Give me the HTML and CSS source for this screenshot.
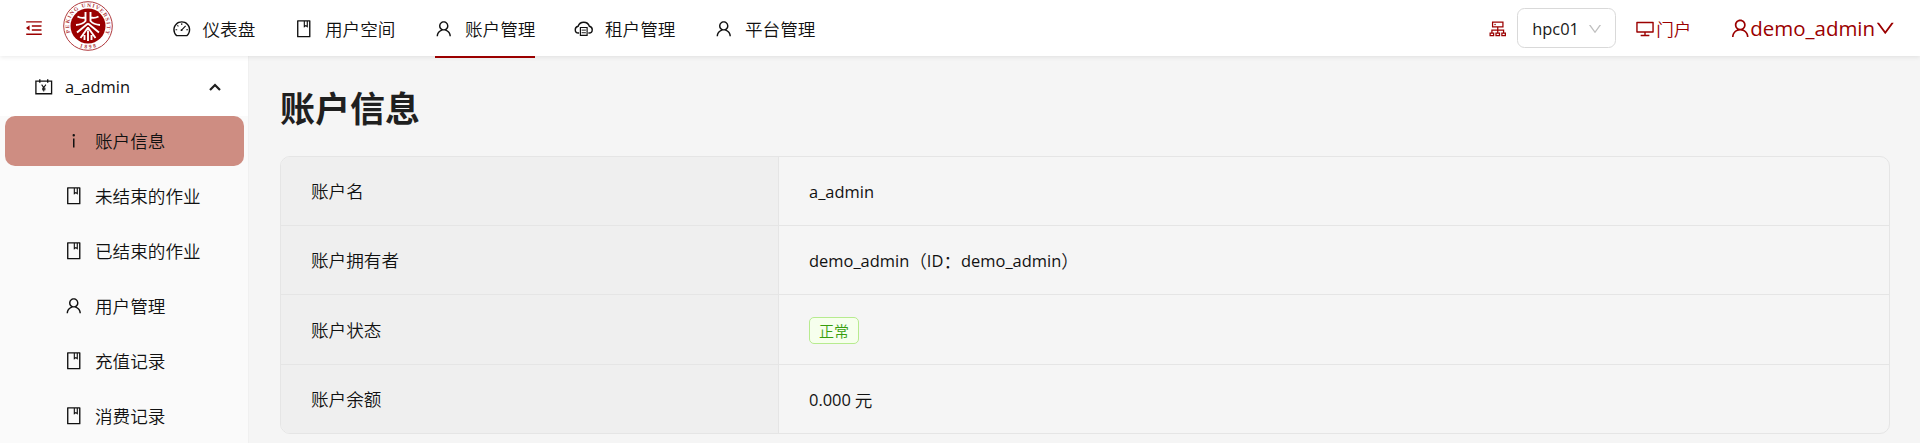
FILE: index.html
```html
<!DOCTYPE html>
<html lang="zh-CN">
<head>
<meta charset="utf-8">
<title>账户信息</title>
<link rel="stylesheet" href="styles.css">
</head>
<body>
<svg class="sprite" aria-hidden="true">
  <symbol id="user" viewBox="0 0 1024 1024"><path d="M858.5 763.6a374 374 0 00-80.6-119.5 375.63 375.63 0 00-119.5-80.6c-.4-.2-.8-.3-1.2-.5C719.5 518 760 444.7 760 362c0-137-111-248-248-248S264 225 264 362c0 82.7 40.5 156 102.8 201.1-.4.2-.8.3-1.2.5-44.8 18.9-85 46-119.5 80.6a375.63 375.63 0 00-80.6 119.5A371.7 371.7 0 00136 901.8a8 8 0 008 8.2h60c4.4 0 7.9-3.5 8-7.8 2-77.2 33-149.5 87.8-204.3 56.7-56.7 132-87.9 212.2-87.9s155.500 31.200 212.200 87.900C779 752.700 810 825 812 902.200c.1 4.400 3.600 7.800 8 7.800h60a8 8 0 008-8.200c-1-47.800-10.900-94.300-29.500-138.200zM512 534c-45.900 0-89.100-17.900-121.600-50.400S340 407.900 340 362c0-45.900 17.900-89.100 50.400-121.600S466.100 190 512 190s89.100 17.900 121.600 50.400S684 316.100 684 362c0 45.900-17.900 89.100-50.400 121.600S557.900 534 512 534z"/></symbol>
  <symbol id="book" viewBox="0 0 1024 1024"><path d="M832 64H192c-17.700 0-32 14.300-32 32v832c0 17.700 14.300 32 32 32h640c17.700 0 32-14.300 32-32V96c0-17.700-14.300-32-32-32zm-260 72h96v209.900L621.500 312 572 347.400V136zm220 752H232V136h280v296.900c0 3.300 1 6.600 3 9.300a15.900 15.900 0 0022.300 3.700l83.800-59.900 81.400 59.400c2.700 2 6 3.100 9.400 3.100 8.800 0 16-7.200 16-16V136h64v752z"/></symbol>
  <symbol id="desktop" viewBox="0 0 1024 1024"><path d="M928 140H96c-17.700 0-32 14.300-32 32v496c0 17.700 14.300 32 32 32h380v112H304c-8.800 0-16 7.200-16 16v48c0 4.400 3.600 8 8 8h432c4.400 0 8-3.600 8-8v-48c0-8.800-7.200-16-16-16H548V700h380c17.700 0 32-14.300 32-32V172c0-17.700-14.300-32-32-32zm-40 488H136V212h752v416z"/></symbol>
  <symbol id="down" viewBox="0 0 1024 1024"><path d="M884 256h-75c-5.100 0-9.900 2.500-12.900 6.600L512 654.200 227.900 262.600c-3-4.100-7.800-6.600-12.900-6.600h-75c-6.500 0-10.300 7.400-6.500 12.700l352.600 486.100c12.800 17.600 39 17.600 51.700 0l352.600-486.100c3.900-5.300.1-12.700-6.400-12.700z"/></symbol>
  <symbol id="fold" viewBox="0 0 1024 1024"><path d="M408 442h480c4.400 0 8-3.600 8-8v-56c0-4.400-3.600-8-8-8H408c-4.400 0-8 3.600-8 8v56c0 4.400 3.600 8 8 8zm-8 204c0 4.400 3.600 8 8 8h480c4.400 0 8-3.600 8-8v-56c0-4.400-3.600-8-8-8H408c-4.400 0-8 3.600-8 8v56zm504-486H120c-4.400 0-8 3.600-8 8v56c0 4.400 3.600 8 8 8h784c4.400 0 8-3.600 8-8v-56c0-4.400-3.600-8-8-8zm0 632H120c-4.400 0-8 3.600-8 8v56c0 4.400 3.600 8 8 8h784c4.400 0 8-3.600 8-8v-56c0-4.400-3.600-8-8-8zM115.400 518.900L271.700 642c5.800 4.600 14.400.5 14.400-6.900V388.900c0-7.400-8.500-11.500-14.400-6.900L115.400 505.100a8.740 8.740 0 000 13.800z"/></symbol>
  <symbol id="dashboard" viewBox="0 0 1024 1024"><path d="M924.800 385.600a446.700 446.700 0 00-96-142.400 446.700 446.700 0 00-142.400-96C631.100 123.800 572.500 112 512 112s-119.100 11.800-174.400 35.200a446.700 446.700 0 00-142.400 96 446.700 446.700 0 00-96 142.400C75.800 440.900 64 499.500 64 560c0 132.700 58.300 257.700 159.900 343.100l1.700 1.400c5.800 4.800 13.100 7.500 20.600 7.500h531.700c7.500 0 14.800-2.700 20.600-7.500l1.700-1.400C901.700 817.700 960 692.700 960 560c0-60.500-11.900-119.100-35.200-174.400zM761.400 836H262.600A371.120 371.120 0 01140 560c0-99.400 38.700-192.800 109-263 70.300-70.300 163.700-109 263-109 99.400 0 192.800 38.700 263 109 70.300 70.300 109 163.700 109 263 0 105.600-44.500 205.500-122.600 276z"/><path d="M512 228v88M282 330l56 56M186 560h86M752 560h86M500 590L715 358" fill="none" stroke="currentColor" stroke-width="56"/><circle cx="500" cy="585" r="50"/></symbol>
  <symbol id="accountbook" viewBox="0 0 1024 1024"><path d="M100 220h824v660H100zM304 120v176M720 120v176" fill="none" stroke="currentColor" stroke-width="70"/><path d="M400 400l112 160 112-160M512 560v200M420 590h184M420 672h184" fill="none" stroke="currentColor" stroke-width="54"/></symbol>
  <symbol id="cloud" viewBox="0 0 1024 1024"><path d="M270 738H235C130 735 66 650 66 560c0-92 62-155 150-177C260 255 375 172 512 172s252 83 296 211c88 22 150 85 150 177 0 90-64 175-169 178h-35" fill="none" stroke="currentColor" stroke-width="74"/><path d="M336 448h352v410H336z" fill="none" stroke="currentColor" stroke-width="62"/><path d="M400 585h224M400 720h224" stroke="currentColor" stroke-width="48"/></symbol>
  <symbol id="cluster" viewBox="0 0 1024 1024"><path d="M240 170h544v240H240zM512 410v180M205 735V580h614v155M112 740h184v128H112zM420 740h184v128H420zM728 740h184v128H728zM512 580v160" fill="none" stroke="currentColor" stroke-width="66"/><circle cx="370" cy="290" r="40"/></symbol>
  <symbol id="info" viewBox="0 0 1024 1024"><path d="M448 224a64 64 0 10128 0 64 64 0 10-128 0zm96 168h-64c-4.400 0-8 3.600-8 8v464c0 4.400 3.600 8 8 8h64c4.400 0 8-3.600 8-8V400c0-4.400-3.600-8-8-8z"/></symbol>
</svg>

<header class="header">
  <svg class="icon fold"><use href="#fold"/></svg>
  <svg class="logo" viewBox="0 0 50 50">
    <circle cx="25" cy="25" r="24.300" class="logo-ring"/>
    <circle cx="25" cy="25" r="17.500" class="logo-disc"/>
    <path id="arc-top" d="M7.300 31.500A18.900 18.900 0 1 1 42.700 31.500" fill="none"/>
    <path id="arc-bottom" d="M9 41A22.700 22.700 0 0 0 41 41" fill="none"/>
    <text class="logo-text"><textPath href="#arc-top" textLength="74">PEKING UNIVERSITY</textPath></text>
    <text class="logo-text"><textPath href="#arc-bottom" startOffset="50%" text-anchor="middle" textLength="17">1898</textPath></text>
    <path class="logo-mark" d="M22.500 11V20Q19.500 23.500 13 24M14.500 15.500Q18 17.500 22 16.500M27.500 11V20Q30.500 23.500 37 24M35.500 15.500Q32 17.500 28 16.500M25 22.500L14 31.500M25 22.500L36 31.500M25 26.500L17.500 37M25 26.500L32.500 37M25 29.500V40M21.500 34V39M28.500 34V39"/>
  </svg>
  <nav class="nav">
    <a class="nav-item"><svg class="icon"><use href="#dashboard"/></svg><span>仪表盘</span></a>
    <a class="nav-item"><svg class="icon"><use href="#book"/></svg><span>用户空间</span></a>
    <a class="nav-item active"><svg class="icon"><use href="#user"/></svg><span>账户管理</span></a>
    <a class="nav-item"><svg class="icon"><use href="#cloud"/></svg><span>租户管理</span></a>
    <a class="nav-item"><svg class="icon"><use href="#user"/></svg><span>平台管理</span></a>
  </nav>
  <div class="tools">
    <svg class="icon"><use href="#cluster"/></svg>
    <div class="select"><span class="latin">hpc01</span><svg class="icon arrow"><use href="#down"/></svg></div>
    <a class="portal"><svg class="icon"><use href="#desktop"/></svg><span>门户</span></a>
    <a class="account"><svg class="icon"><use href="#user"/></svg><span class="latin">demo_admin</span><svg class="icon"><use href="#down"/></svg></a>
  </div>
</header>

<div class="body">
  <aside class="sidebar">
    <div class="group"><svg class="icon"><use href="#accountbook"/></svg><span class="latin">a_admin</span>
      <svg class="caret" viewBox="0 0 12 8"><path d="M1 7L6 2L11 7"/></svg></div>
    <ul class="submenu">
      <li class="item selected"><svg class="icon"><use href="#info"/></svg><span>账户信息</span></li>
      <li class="item"><svg class="icon"><use href="#book"/></svg><span>未结束的作业</span></li>
      <li class="item"><svg class="icon"><use href="#book"/></svg><span>已结束的作业</span></li>
      <li class="item"><svg class="icon"><use href="#user"/></svg><span>用户管理</span></li>
      <li class="item"><svg class="icon"><use href="#book"/></svg><span>充值记录</span></li>
      <li class="item"><svg class="icon"><use href="#book"/></svg><span>消费记录</span></li>
    </ul>
  </aside>
  <main class="content">
    <h1 class="title">账户信息</h1>
    <dl class="details">
      <div class="row"><dt>账户名</dt><dd><span class="latin">a_admin</span></dd></div>
      <div class="row"><dt>账户拥有者</dt><dd><span class="latin">demo_admin</span>（<span class="latin">ID</span>：<span class="latin">demo_admin</span>）</dd></div>
      <div class="row tall"><dt>账户状态</dt><dd><span class="tag">正常</span></dd></div>
      <div class="row"><dt>账户余额</dt><dd><span class="latin">0.000</span>&nbsp;元</dd></div>
    </dl>
  </main>
</div>
</body>
</html>
```
FILE: styles.css
```css
* { box-sizing: border-box; }
body {
  margin: 0;
  height: 443px;
  overflow: hidden;
  display: flex;
  flex-direction: column;
  background: #f5f5f5;
  color: #111;
  font: 350 17.6px/27.5px "Noto Sans CJK SC", sans-serif;
}
.latin { font-family: "Open Sans", sans-serif; font-size: .935em; font-weight: 400; }
.sprite { position: absolute; width: 0; height: 0; }
.icon { width: 19.5px; height: 19.5px; margin: 0 -1px; flex: none; fill: currentColor; }

.header {
  height: 56px;
  flex: none;
  display: flex;
  align-items: center;
  padding: 0 24px 0 25px;
  background: #fff;
  box-shadow: 0 1px 5px rgba(0, 0, 0, .09);
  position: relative;
  z-index: 1;
}
.header .fold { color: #9b0000; width: 20px; height: 20px; margin: 0 19px 0 -1px; }
.logo { width: 50px; height: 50px; flex: none; margin-top: -4px; }
.logo-ring { fill: #fff; stroke: #b03a3e; stroke-width: 1; }
.logo-disc { fill: #9b0000; }
.logo-text { font: 700 5.500px "Liberation Serif", serif; fill: #b03a3e; }
.logo-mark { fill: none; stroke: #fff; stroke-width: 1.9; }

.nav { display: flex; height: 56px; margin-left: 39.500px; }
.nav-item {
  display: flex;
  align-items: center;
  gap: 12.5px;
  margin: 0 20px;
  height: 58px;
  padding-top: 2px;
  border-bottom: 2px solid transparent;
  white-space: nowrap;
}
.nav-item span { width: 70px; }
.nav-item:first-child span { width: 52.5px; }
.nav-item.active { border-bottom-color: #9b0000; }

.tools { margin-left: auto; padding-top: 1px; display: flex; align-items: center; color: #9b0000; }
.select {
  width: 99px;
  height: 40px;
  margin: -1px 20px 0 11px;
  padding: 1px 12px 0 14px;
  display: flex;
  align-items: center;
  justify-content: space-between;
  border: 1px solid #d9d9d9;
  border-radius: 7.5px;
  background: #fff;
  color: #1a1a1a;
}
.header .arrow { width: 16px; height: 16px; margin: 0; color: #bfbfbf; }
.portal { display: flex; align-items: center; gap: 2px; margin-right: 38px; }
.portal .icon { width: 20px; height: 20px; }
.account { display: flex; align-items: center; font-size: 21.900px; }
.account .icon { width: 22.500px; height: 22.500px; margin: 0 -.8px; }

.body { flex: 1; display: flex; min-height: 0; }
.sidebar { width: 249px; flex: none; background: #fafafa; border-right: 1px solid #f0f0f0; }
.group { height: 60px; padding: 2px 27px 0 35px; display: flex; align-items: center; gap: 12.5px; background: #fff; }
.caret { width: 12px; height: 8px; margin-left: auto; fill: none; stroke: #1f1f1f; stroke-width: 2.2; }
.submenu { list-style: none; margin: 0; padding: 0 4px 0 5px; display: grid; gap: 5px; }
.item { height: 50px; padding-left: 60px; display: flex; align-items: center; gap: 12.5px; border-radius: 10px; }
.selected { background: #ce8d82; }

.content { flex: 1; padding: 27px 30px 0 31px; }
.title { margin: 0 0 26px; font-size: 35px; line-height: 47px; font-weight: 700; color: #1f1f1f; }
.details { margin: 0; border: 1px solid #e5e5e5; border-radius: 10px; overflow: hidden; }
.row { display: grid; grid-template-columns: 498px 1fr; height: 69px; border-bottom: 1px solid #e5e5e5; }
.row.tall { height: 70px; }
.row:last-child { height: 68px; border-bottom: 0; }
.row dt, .row dd { margin: 0; padding: 0 30px; display: flex; align-items: center; }
.row dt { background: #efefef; border-right: 1px solid #e5e5e5; }
.row dd { padding-top: 1px; }
.tag {
  height: 27px;
  padding: 0 9px;
  line-height: 25px;
  font-size: 15px;
  color: #389e0d;
  background: #f6ffed;
  border: 1px solid #b7eb8f;
  border-radius: 5px;
}
```
